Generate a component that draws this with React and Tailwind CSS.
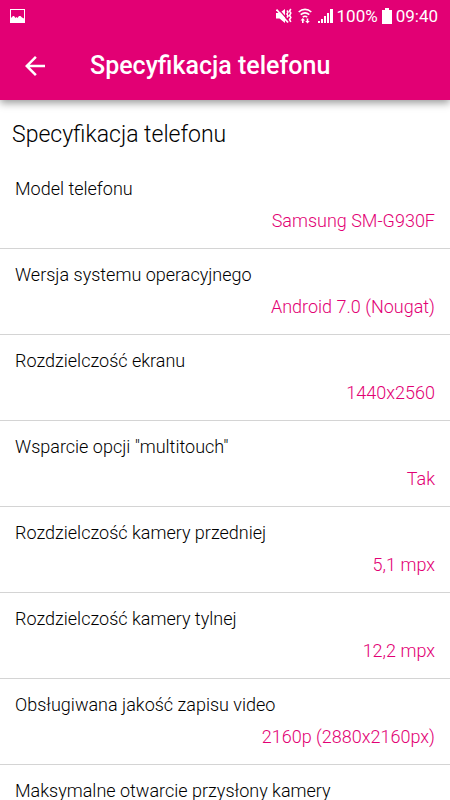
import { MdArrowBack } from 'react-icons/md'

const SPECS = [
  { label: 'Model telefonu', value: 'Samsung SM-G930F' },
  { label: 'Wersja systemu operacyjnego', value: 'Android 7.0 (Nougat)' },
  { label: 'Rozdzielczość ekranu', value: '1440x2560' },
  { label: 'Wsparcie opcji "multitouch"', value: 'Tak' },
  { label: 'Rozdzielczość kamery przedniej', value: '5,1 mpx' },
  { label: 'Rozdzielczość kamery tylnej', value: '12,2 mpx' },
  { label: 'Obsługiwana jakość zapisu video', value: '2160p (2880x2160px)' },
  { label: 'Maksymalne otwarcie przysłony kamery', value: '' },
]

function PictureIcon() {
  return (
    <svg width="15" height="14" viewBox="0 0 15 14" fill="none" aria-hidden="true">
      <rect x="0.5" y="0.5" width="14" height="13" stroke="#fff" />
      <path d="M1 9l1-1 1-1h1l1.500 2 1-1 1 1 1.500-2h1.500l1.500 1.500 1 0.500 1 0.500v4H1z" fill="#fff" />
    </svg>
  )
}

function MutedIcon() {
  return (
    <svg width="16" height="16" viewBox="0 0 16 16" fill="none" aria-hidden="true">
      <path d="M0 5h3.500L9 1v14l-5.500-4.500H0z" fill="#fff" />
      <path d="M2 0.500l10 11.500" stroke="#e20074" strokeWidth="1.200" />
      <path d="M0.500 1.500l11.500 13" stroke="#fff" strokeWidth="1.800" />
      <path d="M11 2.500l1 1.500-1 2 1 2-1 1.500M14.800 1l-1.200 2 1.200 2-1.200 2.500 1.200 2-1.200 2 1.200 2.500" stroke="#fff" strokeWidth="1.600" />
    </svg>
  )
}

function WifiIcon() {
  return (
    <svg width="14" height="16" viewBox="0 0 14 16" fill="none" aria-hidden="true">
      <path d="M0.700 4c3.700-3.500 8.900-3.500 12.600 0M2.700 6.700c2.600-2.300 6-2.300 8.600 0M4.800 9.200c1.400-1.200 3-1.200 4.400 0" stroke="#fff" strokeWidth="1.600" />
      <path d="M4.800 10l2.300 2.500H5.600V15H4v-2.500H2.500zM9.500 15.500L7.200 13h1.500v-2.500h1.600V13h1.500z" fill="#fff" />
    </svg>
  )
}

function SignalIcon() {
  return (
    <svg width="15" height="16" viewBox="0 0 15 16" fill="#fff" aria-hidden="true">
      <path d="M0 13h2v2H0zM3 11h2v4H3zM6 8h2v7H6zM9 5h2v10H9zM12 1h3v14h-3z" />
    </svg>
  )
}

function BatteryIcon() {
  return (
    <svg width="10" height="16" viewBox="0 0 10 16" fill="#fff" aria-hidden="true">
      <path d="M3 0h4v2h3v14H0V2h3z" />
    </svg>
  )
}

function StatusBar() {
  return (
    <div className="flex h-8 items-center justify-between pr-3 pl-2.5">
      <PictureIcon />
      <div className="flex items-center text-[17px] leading-8">
        <div className="flex items-center gap-1.5">
          <MutedIcon />
          <WifiIcon />
          <SignalIcon />
        </div>
        <span className="ml-1">100%</span>
        <span className="mx-1">
          <BatteryIcon />
        </span>
        <span>09:40</span>
      </div>
    </div>
  )
}

function SpecRow({ label, value }) {
  return (
    <div className="h-[86px] border-b border-[#d4d4d4] px-[15px] pt-3.5 text-lg leading-6 font-light">
      <dt className="text-black">{label}</dt>
      <dd className="mt-2 text-right text-[#e20074]">{value}</dd>
    </div>
  )
}

export default function App() {
  return (
    <div className="flex h-screen flex-col bg-white font-['Roboto',sans-serif]">
      <header className="z-10 shrink-0 bg-[#e20074] text-white shadow-[0_3px_8px_rgba(0,0,0,0.4)]">
        <StatusBar />
        <div className="flex h-17 items-center pl-5">
          <button type="button" aria-label="Wstecz" className="flex">
            <MdArrowBack size={30} />
          </button>
          <h1 className="ml-10 text-[25px] leading-8 font-medium">Specyfikacja telefonu</h1>
        </div>
      </header>

      <main className="min-h-0 flex-1 overflow-y-auto [scrollbar-width:none]">
        <h2 className="px-3 pt-[19px] pb-3 text-[23px] leading-8 font-light text-black">Specyfikacja telefonu</h2>
        <dl>
          {SPECS.map((spec) => (
            <SpecRow key={spec.label} label={spec.label} value={spec.value} />
          ))}
        </dl>
      </main>
    </div>
  )
}
